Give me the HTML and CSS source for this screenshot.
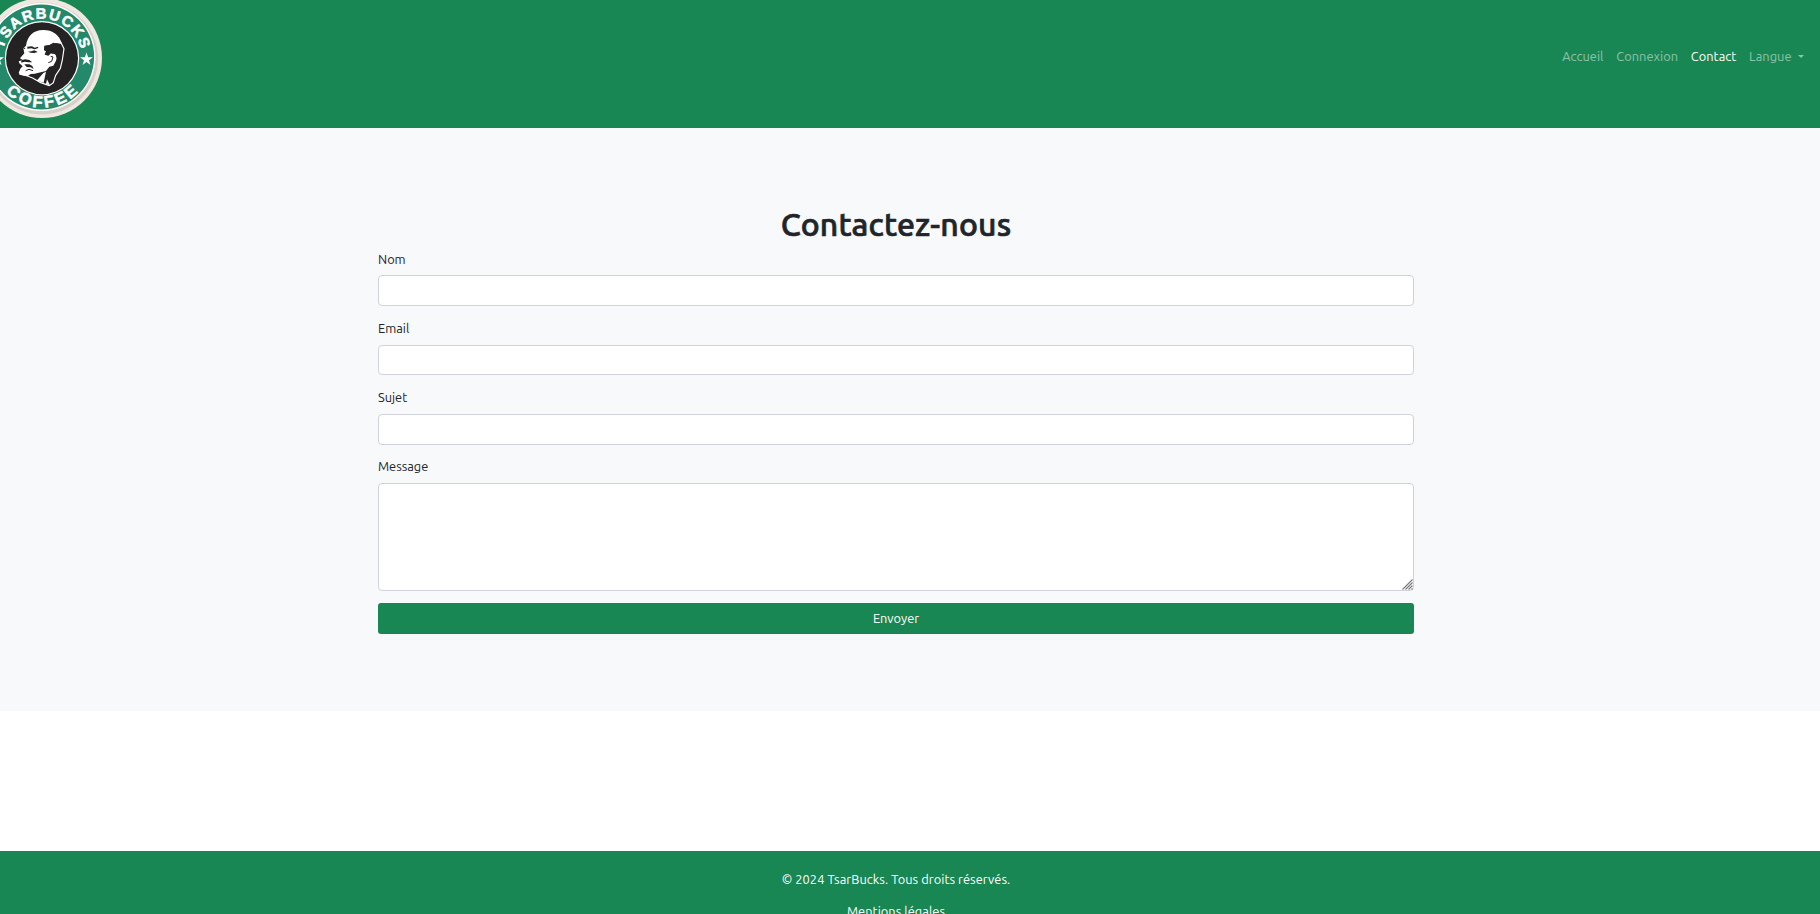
FILE: index.html
```html
<!DOCTYPE html>
<html lang="fr">
<head>
<meta charset="utf-8">
<title>Contact - TsarBucks</title>
<link rel="stylesheet" href="styles.css">
</head>
<body>
<nav class="navbar">
  <svg class="logo" width="124" height="124" viewBox="-20 -4 124 124">
    <defs>
      <path id="arc-top" d="M2.200 58.500a39.800 39.800 0 0 1 79.600 0"/>
      <path id="arc-bottom" d="M-7.700 58a49.700 49.700 0 0 0 99.400 0"/>
    </defs>
    <circle cx="42" cy="58" r="60" fill="#eee8e0"/>
    <circle cx="42" cy="58.500" r="56" fill="#d6d0c9"/>
    <circle cx="41.500" cy="57" r="54" fill="#fff"/>
    <circle cx="41.500" cy="57" r="52.600" fill="#24896a"/>
    <circle cx="42" cy="58.200" r="37.200" fill="#fff"/>
    <circle cx="42" cy="58.200" r="36" fill="#242223"/>
    <text class="logo-text"><textPath href="#arc-top" startOffset="50%" text-anchor="middle" textLength="106">TSARBUCKS</textPath></text>
    <text class="logo-text wide"><textPath href="#arc-bottom" startOffset="50%" text-anchor="middle" textLength="81">COFFEE</textPath></text>
    <path fill="#fff" d="M86.500 52.500l1.600 4.700h4.900l-4 3 1.500 4.800-4-2.900-4 2.900 1.500-4.800-4-3h4.900zM-2.500 52.500l1.600 4.700h4.900l-4 3 1.500 4.800-4-2.900-4 2.900 1.500-4.800-4-3h4.900z"/>
    <g transform="scale(.3333)">
      <path fill="#fff" d="M78 137C82 110 98 90 130 90C158 90 178 104 186 132L168 129L156 134L134 138L132 150L138 154L134 164L146 166L152 160C166 158 174 168 168 182L160 197L148 200L138 213L104 221L92 222L82 229L60 224L56 218L62 205L68 199L58 190L56 184L68 180L60 175L73 160L70 145Z"/>
      <path fill="none" stroke="#fff" stroke-width="3.500" stroke-linejoin="round" d="M182 126L192 146L187 180L181 205L167 226L160 248L148 257L122 248L98 234L76 226L58 222"/>
      <path fill="#fff" d="M130 219L138 215L131 248L110 242ZM141 238L150 256L138 252Z"/>
      <path fill="#242223" d="M133 137L148 135L160 128L176 133L188 148L184 178L175 205L160 224L166 197L172 178L166 162L152 160L145 167L135 164L139 154L132 150Z"/>
      <path fill="#242223" d="M82 140L96 139L104 143L114 140L115 144L104 148L94 145L82 146ZM84 155L94 154L103 151L113 156L103 159L92 158ZM64 181L75 178L88 180L97 187L86 187L74 185L64 188ZM73 193L88 193L97 198L101 207L92 202L80 201ZM66 142L76 144L75 148Z"/>
      <path fill="none" stroke="#242223" stroke-width="3" d="M145 188L155 184L159 171L152 169M77 212L87 208L99 212"/>
    </g>
  </svg>
  <ul class="nav">
    <li><a class="nl">Accueil</a></li>
    <li><a class="nl">Connexion</a></li>
    <li><a class="nl active">Contact</a></li>
    <li><a class="nl">Langue</a><i class="caret"></i></li>
  </ul>
</nav>
<main class="contact">
  <h1>Contactez-nous</h1>
  <form>
    <label for="nom">Nom</label><input id="nom" type="text">
    <label for="email">Email</label><input id="email" type="email">
    <label for="sujet">Sujet</label><input id="sujet" type="text">
    <label for="message">Message</label>
    <div class="area">
      <textarea id="message"></textarea>
      <svg class="grip" width="11" height="11" viewBox="0 0 11 11"><path d="M.5 10.500l10-10M3.500 10.500l7-7M6.500 10.500l4-4M9.500 10.500l1-1" stroke="#777" stroke-width="1.100"/></svg>
    </div>
    <button type="button">Envoyer</button>
  </form>
</main>
<footer class="footer">
  <p>© 2024 TsarBucks. Tous droits réservés.</p>
  <p>Mentions légales</p>
</footer>
</body>
</html>
```
FILE: styles.css
```css
* { box-sizing: border-box; }
html, body { height: 914px; overflow: hidden; }
body {
  margin: 0;
  display: flex;
  flex-direction: column;
  background: #fff;
  color: #212529;
  font: 12.800px/19.200px "Ubuntu", "Noto Sans", sans-serif;
}
.navbar {
  flex: none;
  height: 128px;
  background: #198754;
  display: flex;
  justify-content: space-between;
  align-items: flex-start;
  padding-right: 16px;
}
.logo { margin: -4px 0 0 -20px; }
.logo-text { font: bold 15px "Liberation Sans", sans-serif; fill: #fff; stroke: #fff; stroke-width: .5px; }
.logo-text.wide { font-size: 16.500px; }
.nav { list-style: none; display: flex; gap: 12.800px; margin: 47px 0 0; padding: 0; }
.nav li { display: flex; align-items: center; }
.nl { color: rgba(255, 255, 255, .5); white-space: nowrap; letter-spacing: .04px; }
.nl.active { color: #fff; }
.caret {
  margin-left: 6.500px;
  border: 3px solid transparent;
  border-top-color: rgba(255, 255, 255, .5);
  border-bottom: 0;
}
.contact { flex: none; height: 583px; background: #f8f9fa; padding: 77px 406px 0 378px; }
h1 {
  margin: 0 0 6.400px;
  height: 38.400px;
  font-size: 32px;
  font-weight: 500;
  line-height: 38.400px;
  letter-spacing: .16px;
  text-align: center;
  -webkit-text-stroke: .7px #212529;
}
form { display: flex; flex-direction: column; }
label { height: 19.200px; margin: 0 0 6.400px; }
input, textarea {
  display: block;
  width: 100%;
  border: 1px solid #ced4da;
  border-radius: 4px;
  background: #fff;
  outline: 0;
}
input { height: 30.800px; margin: 0 0 12.800px; }
.area { position: relative; margin-bottom: 12px; }
textarea { height: 108px; resize: none; }
.grip { position: absolute; right: 1px; bottom: 1px; }
button {
  height: 31px;
  border: 0;
  border-radius: 3px;
  background: #198754;
  color: #fff;
  font: inherit;
}
.footer { flex: none; margin-top: 140px; height: 63px; overflow: hidden; background: #198754; color: #fff; padding: 19px 28px 0 0; text-align: center; letter-spacing: .06px; }
.footer p { margin: 0 0 12.800px; }
```
